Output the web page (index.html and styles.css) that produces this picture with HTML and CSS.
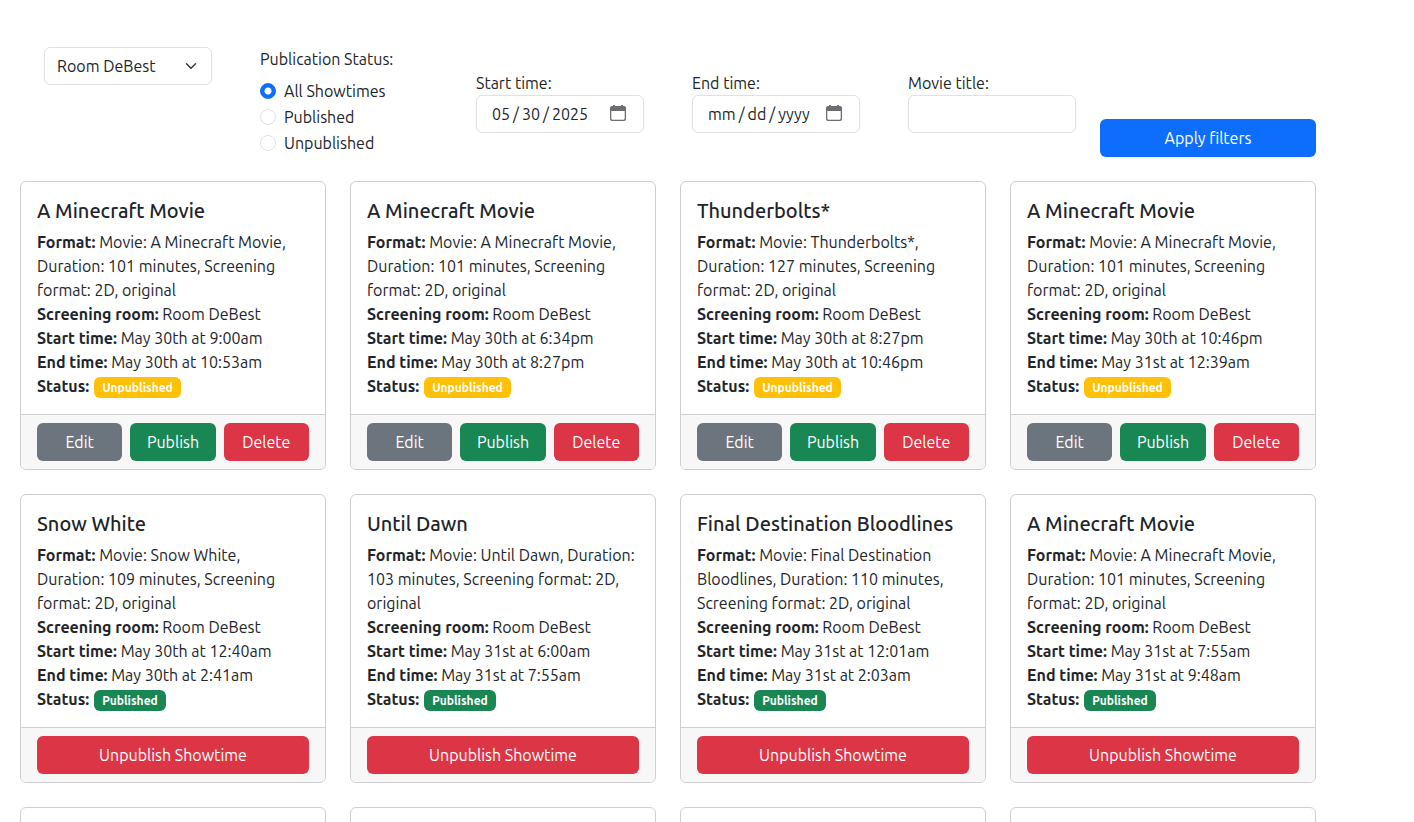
FILE: index.html
```html
<!DOCTYPE html>
<html lang="en">
<head>
<meta charset="utf-8">
<meta name="viewport" content="width=device-width, initial-scale=1">
<title>Showtimes</title>
<link rel="stylesheet" href="styles.css">
</head>
<body>
<main class="page">
  <form class="filters">
    <div class="filter">
      <div class="control">
        <select class="control-field" aria-label="Screening room"><option>Room DeBest</option></select>
        <svg class="control-icon" viewBox="0 0 16 16" width="12" height="12" aria-hidden="true"><path d="m2 5 6 6 6-6" fill="none" stroke="#343a40" stroke-width="2" stroke-linecap="round" stroke-linejoin="round"/></svg>
      </div>
    </div>
    <fieldset class="filter filter-status">
      <legend class="status-legend">Publication Status:</legend>
      <label class="choice"><input class="radio" type="radio" name="status" checked>All Showtimes</label>
      <label class="choice"><input class="radio" type="radio" name="status">Published</label>
      <label class="choice"><input class="radio" type="radio" name="status">Unpublished</label>
    </fieldset>
    <div class="filter filter-inset">
      <label for="start">Start time:</label>
      <div class="control control-date">
        <input class="control-field" id="start" type="date" value="2025-05-30">
        <svg class="control-icon" viewBox="0 0 16 16" width="16" height="16" aria-hidden="true"><g fill="#6d6d72"><path d="M3 0h2v2H3zM11 0h2v2h-2zM2 1h12a2 2 0 0 1 2 2v3H0V3a2 2 0 0 1 2-2z"/><path d="M0 5h1.300v8.500c0 .700.500 1.200 1.200 1.200h11c.700 0 1.200-.500 1.200-1.200V5H16v9a2 2 0 0 1-2 2H2a2 2 0 0 1-2-2z"/></g></svg>
      </div>
    </div>
    <div class="filter filter-inset">
      <label for="end">End time:</label>
      <div class="control control-date">
        <input class="control-field" id="end" type="date">
        <svg class="control-icon" viewBox="0 0 16 16" width="16" height="16" aria-hidden="true"><g fill="#6d6d72"><path d="M3 0h2v2H3zM11 0h2v2h-2zM2 1h12a2 2 0 0 1 2 2v3H0V3a2 2 0 0 1 2-2z"/><path d="M0 5h1.300v8.500c0 .700.500 1.200 1.200 1.200h11c.700 0 1.200-.500 1.200-1.200V5H16v9a2 2 0 0 1-2 2H2a2 2 0 0 1-2-2z"/></g></svg>
      </div>
    </div>
    <div class="filter filter-inset">
      <label for="title">Movie title:</label>
      <div class="control"><input class="control-field" id="title" type="text"></div>
    </div>
    <button class="btn btn-primary" type="button">Apply filters</button>
  </form>

  <section class="cards">
    <article class="card">
      <div class="card-body">
        <h2 class="card-title">A Minecraft Movie</h2>
        <p><b>Format:</b> Movie: A Minecraft Movie, Duration: 101 minutes, Screening format: 2D, original</p>
        <p><b>Screening room:</b> Room DeBest</p>
        <p><b>Start time:</b> May 30th at 9:00am</p>
        <p><b>End time:</b> May 30th at 10:53am</p>
        <p class="status"><b>Status:</b> <span class="badge badge-warning">Unpublished</span></p>
      </div>
      <div class="card-footer">
        <button class="btn btn-secondary" type="button">Edit</button>
        <button class="btn btn-success" type="button">Publish</button>
        <button class="btn btn-danger" type="button">Delete</button>
      </div>
    </article>
    <article class="card">
      <div class="card-body">
        <h2 class="card-title">A Minecraft Movie</h2>
        <p><b>Format:</b> Movie: A Minecraft Movie, Duration: 101 minutes, Screening format: 2D, original</p>
        <p><b>Screening room:</b> Room DeBest</p>
        <p><b>Start time:</b> May 30th at 6:34pm</p>
        <p><b>End time:</b> May 30th at 8:27pm</p>
        <p class="status"><b>Status:</b> <span class="badge badge-warning">Unpublished</span></p>
      </div>
      <div class="card-footer">
        <button class="btn btn-secondary" type="button">Edit</button>
        <button class="btn btn-success" type="button">Publish</button>
        <button class="btn btn-danger" type="button">Delete</button>
      </div>
    </article>
    <article class="card">
      <div class="card-body">
        <h2 class="card-title">Thunderbolts*</h2>
        <p><b>Format:</b> Movie: Thunderbolts*, Duration: 127 minutes, Screening format: 2D, original</p>
        <p><b>Screening room:</b> Room DeBest</p>
        <p><b>Start time:</b> May 30th at 8:27pm</p>
        <p><b>End time:</b> May 30th at 10:46pm</p>
        <p class="status"><b>Status:</b> <span class="badge badge-warning">Unpublished</span></p>
      </div>
      <div class="card-footer">
        <button class="btn btn-secondary" type="button">Edit</button>
        <button class="btn btn-success" type="button">Publish</button>
        <button class="btn btn-danger" type="button">Delete</button>
      </div>
    </article>
    <article class="card">
      <div class="card-body">
        <h2 class="card-title">A Minecraft Movie</h2>
        <p><b>Format:</b> Movie: A Minecraft Movie, Duration: 101 minutes, Screening format: 2D, original</p>
        <p><b>Screening room:</b> Room DeBest</p>
        <p><b>Start time:</b> May 30th at 10:46pm</p>
        <p><b>End time:</b> May 31st at 12:39am</p>
        <p class="status"><b>Status:</b> <span class="badge badge-warning">Unpublished</span></p>
      </div>
      <div class="card-footer">
        <button class="btn btn-secondary" type="button">Edit</button>
        <button class="btn btn-success" type="button">Publish</button>
        <button class="btn btn-danger" type="button">Delete</button>
      </div>
    </article>
    <article class="card">
      <div class="card-body">
        <h2 class="card-title">Snow White</h2>
        <p><b>Format:</b> Movie: Snow White, Duration: 109 minutes, Screening format: 2D, original</p>
        <p><b>Screening room:</b> Room DeBest</p>
        <p><b>Start time:</b> May 30th at 12:40am</p>
        <p><b>End time:</b> May 30th at 2:41am</p>
        <p class="status"><b>Status:</b> <span class="badge badge-success">Published</span></p>
      </div>
      <div class="card-footer"><button class="btn btn-danger" type="button">Unpublish Showtime</button></div>
    </article>
    <article class="card">
      <div class="card-body">
        <h2 class="card-title">Until Dawn</h2>
        <p><b>Format:</b> Movie: Until Dawn, Duration: 103 minutes, Screening format: 2D, original</p>
        <p><b>Screening room:</b> Room DeBest</p>
        <p><b>Start time:</b> May 31st at 6:00am</p>
        <p><b>End time:</b> May 31st at 7:55am</p>
        <p class="status"><b>Status:</b> <span class="badge badge-success">Published</span></p>
      </div>
      <div class="card-footer"><button class="btn btn-danger" type="button">Unpublish Showtime</button></div>
    </article>
    <article class="card">
      <div class="card-body">
        <h2 class="card-title">Final Destination Bloodlines</h2>
        <p><b>Format:</b> Movie: Final Destination Bloodlines, Duration: 110 minutes, Screening format: 2D, original</p>
        <p><b>Screening room:</b> Room DeBest</p>
        <p><b>Start time:</b> May 31st at 12:01am</p>
        <p><b>End time:</b> May 31st at 2:03am</p>
        <p class="status"><b>Status:</b> <span class="badge badge-success">Published</span></p>
      </div>
      <div class="card-footer"><button class="btn btn-danger" type="button">Unpublish Showtime</button></div>
    </article>
    <article class="card">
      <div class="card-body">
        <h2 class="card-title">A Minecraft Movie</h2>
        <p><b>Format:</b> Movie: A Minecraft Movie, Duration: 101 minutes, Screening format: 2D, original</p>
        <p><b>Screening room:</b> Room DeBest</p>
        <p><b>Start time:</b> May 31st at 7:55am</p>
        <p><b>End time:</b> May 31st at 9:48am</p>
        <p class="status"><b>Status:</b> <span class="badge badge-success">Published</span></p>
      </div>
      <div class="card-footer"><button class="btn btn-danger" type="button">Unpublish Showtime</button></div>
    </article>
    <article class="card"><div class="card-body"></div></article>
    <article class="card"><div class="card-body"></div></article>
    <article class="card"><div class="card-body"></div></article>
    <article class="card"><div class="card-body"></div></article>
  </section>
</main>
</body>
</html>
```
FILE: styles.css
```css
* { box-sizing: border-box; }

html { scrollbar-width: none; }

body {
  margin: 0;
  background: #fff;
  color: #212529;
  font-family: Ubuntu, "Noto Sans", sans-serif;
  font-size: 16px;
  line-height: 24px;
}

.page {
  max-width: 1336px;
  padding: 47px 20px 0;
}

.filters {
  display: grid;
  grid-template-columns: repeat(6, minmax(0, 1fr));
  margin-bottom: 24px;
}

.filter {
  min-width: 0;
  margin: 0;
  padding: 0 24px;
  border: 0;
}

.filter-inset {
  padding-top: 24px;
  padding-bottom: 24px;
}

.filter-inset label { display: block; }

.filters > .btn { align-self: end; }

.control {
  display: grid;
  align-items: center;
  height: 38px;
  border: 1px solid #dee2e6;
  border-radius: 6px;
}

.control-field {
  grid-area: 1 / 1;
  width: 100%;
  height: 36px;
  padding: 0 12px;
  border: 0;
  border-radius: 6px;
  background: transparent;
  color: inherit;
  font: inherit;
  appearance: none;
  outline: 0;
}

.control-icon {
  grid-area: 1 / 1;
  justify-self: end;
  margin-right: 14px;
  pointer-events: none;
}

.control-date .control-icon {
  margin-right: 18px;
  margin-bottom: 2px;
}

.control-date .control-field { padding: 0 14px; }

.control-field::-webkit-calendar-picker-indicator { opacity: 0; margin: 0; }
.control-field::-webkit-datetime-edit-text { padding: 0 2px; }
.control-field::-webkit-datetime-edit-month-field,
.control-field::-webkit-datetime-edit-day-field,
.control-field::-webkit-datetime-edit-year-field { padding: 0 1px; }

.status-legend {
  padding: 0;
  margin-bottom: 8px;
}

.choice {
  display: flex;
  align-items: center;
  gap: 8px;
  margin-bottom: 2px;
}

.radio {
  width: 16px;
  height: 16px;
  margin: 0;
  border: 1px solid #dee2e6;
  border-radius: 50%;
  background: #fff;
  appearance: none;
}

.radio:checked {
  border-color: #0d6efd;
  background: radial-gradient(circle, #fff 3px, #0d6efd 4px);
}

.btn {
  height: 38px;
  padding: 0 12px;
  border: 0;
  border-radius: 6px;
  color: #fff;
  font: inherit;
}

.btn-primary { background: #0d6efd; }
.btn-secondary { background: #6c757d; }
.btn-success { background: #198754; }
.btn-danger { background: #dc3545; }

.cards {
  display: grid;
  grid-template-columns: repeat(4, minmax(0, 1fr));
  gap: 24px;
}

.card {
  display: flex;
  flex-direction: column;
  overflow: hidden;
  border: 1px solid #cfcfcf;
  border-radius: 6px;
}

.card-body {
  flex: 1;
  padding: 16px;
}

.card-title {
  margin: 0 0 6px;
  font-size: 20px;
  font-weight: 500;
  line-height: 26px;
}

.card-body p { margin: 0; }

.status {
  display: flex;
  gap: 5px;
}

.badge {
  align-self: center;
  margin-top: 2px;
  padding: 0 8px;
  border-radius: 6px;
  color: #fff;
  font-size: 12px;
  font-weight: 700;
  line-height: 21px;
}

.badge-warning { background: #ffc107; }
.badge-success { background: #198754; }

.card-footer {
  display: flex;
  gap: 8px;
  padding: 8px 16px;
  border-top: 1px solid #cfcfcf;
  background: #f7f7f7;
}

.card-footer .btn { flex: 1 1 0; }
```
